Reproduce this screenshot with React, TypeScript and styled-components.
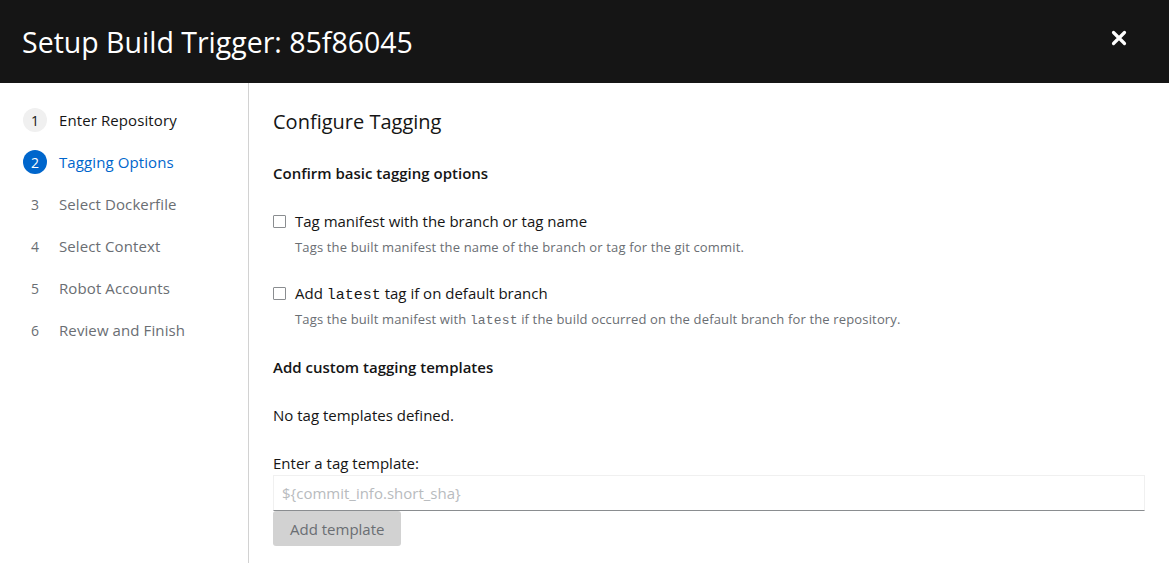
import React from "react";
import styled, { createGlobalStyle } from "styled-components";

const Global = createGlobalStyle`
  html, body { margin: 0; padding: 0; background: #fff; }
  body { font-family: "Open Sans", "Liberation Sans", sans-serif; color: #151515; }
  * { box-sizing: border-box; }
`;

const Page = styled.div`
  width: 1169px;
  height: 563px;
  display: flex;
  flex-direction: column;
  overflow: hidden;
`;

const Header = styled.header`
  height: 83px;
  flex: none;
  background: #151515;
  display: flex;
  align-items: center;
  justify-content: space-between;
  padding: 0 41px 0 22px;
`;

const Title = styled.h1`
  margin: 0 0 -1px 0;
  color: #fff;
  font-size: 28.5px;
  font-weight: 400;
`;

const Close = styled.button`
  border: 0;
  background: transparent;
  padding: 0;
  margin-bottom: 8px;
  width: 18px;
  height: 18px;
  display: flex;
  align-items: center;
  justify-content: center;
  cursor: pointer;
`;

const Body = styled.div`
  flex: 1;
  display: flex;
  min-height: 0;
`;

const Nav = styled.nav`
  width: 249px;
  flex: none;
  border-right: 1px solid #d2d2d2;
  padding: 25px 0 0 23px;
  display: flex;
  flex-direction: column;
  gap: 18px;
`;

type StepState = "done" | "current" | "todo";

const Step = styled.div<{ $state: StepState }>`
  display: flex;
  align-items: center;
  gap: 12px;
  height: 24px;
  font-size: 15px;
  letter-spacing: 0.1px;
  color: ${(p) => (p.$state === "current" ? "#0066cc" : p.$state === "done" ? "#151515" : "#6a6e73")};
`;

const Num = styled.span<{ $state: StepState }>`
  width: 24px;
  height: 24px;
  border-radius: 50%;
  display: flex;
  align-items: center;
  justify-content: center;
  font-size: 14px;
  flex: none;
  background: ${(p) => (p.$state === "current" ? "#0066cc" : p.$state === "done" ? "#f0f0f0" : "transparent")};
  color: ${(p) => (p.$state === "current" ? "#fff" : p.$state === "done" ? "#151515" : "#6a6e73")};
`;

const Main = styled.main`
  flex: 1;
  padding: 26px 24px 0 24px;
  display: flex;
  flex-direction: column;
`;

const H2 = styled.h2`
  margin: 0;
  font-size: 20px;
  font-weight: 400;
  line-height: 26px;
`;

const H3 = styled.h3<{ $mt: number }>`
  margin: ${(p) => p.$mt}px 0 0 0;
  font-size: 15px;
  font-weight: 600;
  line-height: 20px;
`;

const Check = styled.label<{ $mt: number }>`
  margin-top: ${(p) => p.$mt}px;
  display: grid;
  grid-template-columns: 14px 1fr;
  column-gap: 8px;
  row-gap: 7px;
  align-items: center;
`;

const Box = styled.input`
  appearance: none;
  margin: 0;
  width: 13px;
  height: 13px;
  border: 1px solid #8a8d90;
  border-radius: 1px;
  background: #fff;
`;

const CheckLabel = styled.span`
  font-size: 15px;
  line-height: 20px;
`;

const Desc = styled.span`
  grid-column: 2;
  font-size: 13px;
  letter-spacing: 0.15px;
  color: #6a6e73;
  line-height: 18px;
`;

const Code = styled.code`
  font-family: "Liberation Mono", "DejaVu Sans Mono", monospace;
  font-size: 1em;
  line-height: 1;
`;

const Para = styled.p<{ $mt: number }>`
  margin: ${(p) => p.$mt}px 0 0 0;
  font-size: 15px;
  line-height: 20px;
`;

const Input = styled.input`
  margin-top: 2px;
  height: 36px;
  width: 872px;
  border: 1px solid #f0f0f0;
  border-bottom: 1px solid #8a8d90;
  padding: 0 8px;
  font-family: inherit;
  font-size: 15px;
  color: #151515;
  outline: none;
  &::placeholder { color: #b8bbbe; }
`;

const Button = styled.button`
  align-self: flex-start;
  height: 35px;
  padding: 0 17px;
  border: 0;
  border-radius: 3px;
  background: #d2d2d2;
  color: #6a6e73;
  font-family: inherit;
  font-size: 15px;
`;

const steps: { n: number; label: string; state: StepState }[] = [
  { n: 1, label: "Enter Repository", state: "done" },
  { n: 2, label: "Tagging Options", state: "current" },
  { n: 3, label: "Select Dockerfile", state: "todo" },
  { n: 4, label: "Select Context", state: "todo" },
  { n: 5, label: "Robot Accounts", state: "todo" },
  { n: 6, label: "Review and Finish", state: "todo" },
];

export default function App() {
  return (
    <Page>
      <Global />
      <Header>
        <Title>Setup Build Trigger: 85f86045</Title>
        <Close aria-label="Close">
          <svg width="16" height="16" viewBox="0 0 16 16">
            <path d="M2.5 2.5 L13.5 13.5 M13.5 2.5 L2.5 13.5" stroke="#fff" strokeWidth="3.2" strokeLinecap="round" />
          </svg>
        </Close>
      </Header>
      <Body>
        <Nav>
          {steps.map((s) => (
            <Step key={s.n} $state={s.state}>
              <Num $state={s.state}>{s.n}</Num>
              {s.label}
            </Step>
          ))}
        </Nav>
        <Main>
          <H2>Configure Tagging</H2>
          <H3 $mt={28}>Confirm basic tagging options</H3>
          <Check $mt={28}>
            <Box type="checkbox" />
            <CheckLabel>Tag manifest with the branch or tag name</CheckLabel>
            <Desc>Tags the built manifest the name of the branch or tag for the git commit.</Desc>
          </Check>
          <Check $mt={27}>
            <Box type="checkbox" />
            <CheckLabel>
              Add <Code>latest</Code> tag if on default branch
            </CheckLabel>
            <Desc>
              Tags the built manifest with <Code>latest</Code> if the build occurred on the default branch for the repository.
            </Desc>
          </Check>
          <H3 $mt={29}>Add custom tagging templates</H3>
          <Para $mt={28}>No tag templates defined.</Para>
          <Para $mt={28}>Enter a tag template:</Para>
          <Input placeholder="${commit_info.short_sha}" />
          <Button>Add template</Button>
        </Main>
      </Body>
    </Page>
  );
}
